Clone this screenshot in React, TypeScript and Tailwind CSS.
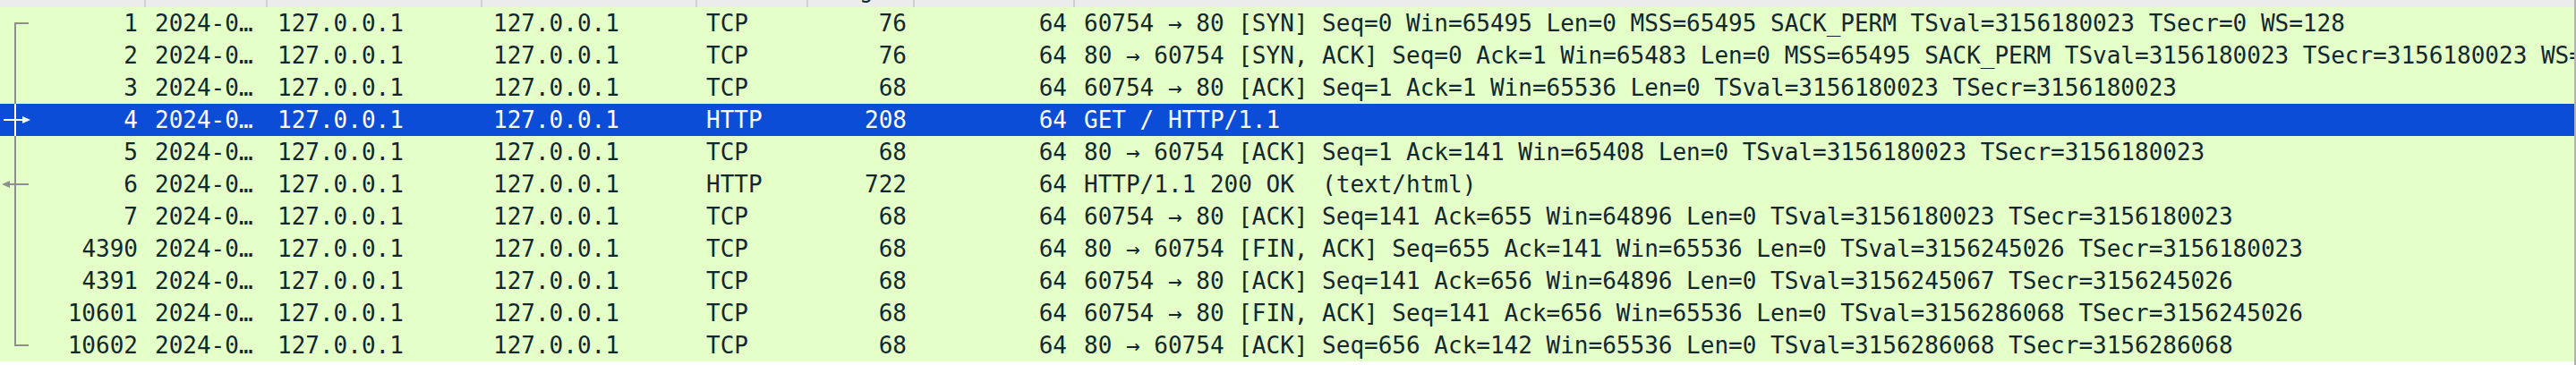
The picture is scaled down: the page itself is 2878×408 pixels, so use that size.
import React from 'react'

type Row = {
  no: number
  proto: string
  len: number
  info: string
  mark?: 'first' | 'last' | 'mid' | 'req' | 'resp'
}

const rows: Row[] = [
  { no: 1, proto: 'TCP', len: 76, mark: 'first', info: '60754 → 80 [SYN] Seq=0 Win=65495 Len=0 MSS=65495 SACK_PERM TSval=3156180023 TSecr=0 WS=128' },
  { no: 2, proto: 'TCP', len: 76, mark: 'mid', info: '80 → 60754 [SYN, ACK] Seq=0 Ack=1 Win=65483 Len=0 MSS=65495 SACK_PERM TSval=3156180023 TSecr=3156180023 WS=128' },
  { no: 3, proto: 'TCP', len: 68, mark: 'mid', info: '60754 → 80 [ACK] Seq=1 Ack=1 Win=65536 Len=0 TSval=3156180023 TSecr=3156180023' },
  { no: 4, proto: 'HTTP', len: 208, mark: 'req', info: 'GET / HTTP/1.1' },
  { no: 5, proto: 'TCP', len: 68, mark: 'mid', info: '80 → 60754 [ACK] Seq=1 Ack=141 Win=65408 Len=0 TSval=3156180023 TSecr=3156180023' },
  { no: 6, proto: 'HTTP', len: 722, mark: 'resp', info: 'HTTP/1.1 200 OK  (text/html)' },
  { no: 7, proto: 'TCP', len: 68, mark: 'mid', info: '60754 → 80 [ACK] Seq=141 Ack=655 Win=64896 Len=0 TSval=3156180023 TSecr=3156180023' },
  { no: 4390, proto: 'TCP', len: 68, mark: 'mid', info: '80 → 60754 [FIN, ACK] Seq=655 Ack=141 Win=65536 Len=0 TSval=3156245026 TSecr=3156180023' },
  { no: 4391, proto: 'TCP', len: 68, mark: 'mid', info: '60754 → 80 [ACK] Seq=141 Ack=656 Win=64896 Len=0 TSval=3156245067 TSecr=3156245026' },
  { no: 10601, proto: 'TCP', len: 68, mark: 'mid', info: '60754 → 80 [FIN, ACK] Seq=141 Ack=656 Win=65536 Len=0 TSval=3156286068 TSecr=3156245026' },
  { no: 10602, proto: 'TCP', len: 68, mark: 'last', info: '80 → 60754 [ACK] Seq=656 Ack=142 Win=65536 Len=0 TSval=3156286068 TSecr=3156286068' },
]

// related-packet tree mark drawn in the first column
function Mark({ kind, selected }: { kind?: Row['mark']; selected: boolean }) {
  const c = selected ? '#ffffff' : '#8e8e8e'
  return (
    <svg width="40" height="36" viewBox="0 0 40 36" className="shrink-0">
      {kind === 'first' && <path d="M17 18 V36 M16 18 H32" stroke={c} strokeWidth="2" fill="none" />}
      {kind === 'last' && <path d="M17 0 V18 M16 18 H32" stroke={c} strokeWidth="2" fill="none" />}
      {(kind === 'mid' || kind === 'req' || kind === 'resp') && (
        <path d="M17 0 V36" stroke={c} strokeWidth="2" fill="none" />
      )}
      {kind === 'req' && (
        <>
          <path d="M4 18 H26" stroke={c} strokeWidth="2" fill="none" />
          <path d="M25 14 L34 18 L25 22 Z" fill={c} />
        </>
      )}
      {kind === 'resp' && (
        <>
          <path d="M10 18 H32" stroke={c} strokeWidth="2" fill="none" />
          <path d="M11 14 L2 18 L11 22 Z" fill={c} />
        </>
      )}
    </svg>
  )
}

const headers: { label: string; w: string }[] = [
  { label: 'No.', w: 'w-[163px]' },
  { label: 'Time', w: 'w-[136px]' },
  { label: 'Source', w: 'w-[240px]' },
  { label: 'Destination', w: 'w-[240px]' },
  { label: 'Proto', w: 'w-[124px]' },
  { label: 'Length', w: 'w-[119px]' },
  { label: 'TTL', w: 'w-[179px]' },
]

export default function App() {
  return (
    <div
      className="w-[2878px] h-[408px] bg-white overflow-hidden text-[26px] text-[#12272e]"
      style={{ fontFamily: '"DejaVu Sans Mono", "Liberation Mono", monospace' }}
    >
      <div className="flex w-[2878px] h-full border-r-2 border-[#b3b3b3]">
        <div className="flex-1 min-w-0">
          {/* column header, scrolled so that only its bottom edge shows */}
          <div className="flex h-[8px] bg-[#ececec] overflow-hidden">
            {headers.map(h => (
              <div key={h.label} className={`${h.w} shrink-0 border-r-2 border-[#d0d0d0] overflow-hidden`}>
                <div className="pl-[10px] leading-[26px] -mt-[25px] whitespace-nowrap">{h.label}</div>
              </div>
            ))}
            <div className="flex-1 overflow-hidden">
              <div className="pl-[10px] leading-[26px] -mt-[25px] whitespace-nowrap">Info</div>
            </div>
          </div>

          {rows.map(r => {
            const sel = r.no === 4
            return (
              <div
                key={r.no}
                className={`flex h-[36px] leading-[36px] whitespace-nowrap ${
                  sel ? 'bg-[#0b4dd6] text-white' : 'bg-[#e4ffc7]'
                }`}
              >
                <div className="w-[163px] shrink-0 flex items-center pr-[9px]">
                  <Mark kind={r.mark} selected={sel} />
                  <span className="flex-1 text-right">{r.no}</span>
                </div>
                <div className="w-[136px] shrink-0 pl-[10px] overflow-hidden">2024-0…</div>
                <div className="w-[240px] shrink-0 pl-[11px]">127.0.0.1</div>
                <div className="w-[240px] shrink-0 pl-[12px]">127.0.0.1</div>
                <div className="w-[124px] shrink-0 pl-[10px]">{r.proto}</div>
                <div className="w-[119px] shrink-0 pr-[9px] text-right">{r.len}</div>
                <div className="w-[179px] shrink-0 pr-[9px] text-right">64</div>
                <div className="flex-1 min-w-0 pl-[10px] overflow-hidden whitespace-pre">{r.info}</div>
              </div>
            )
          })}
        </div>
      </div>
    </div>
  )
}
